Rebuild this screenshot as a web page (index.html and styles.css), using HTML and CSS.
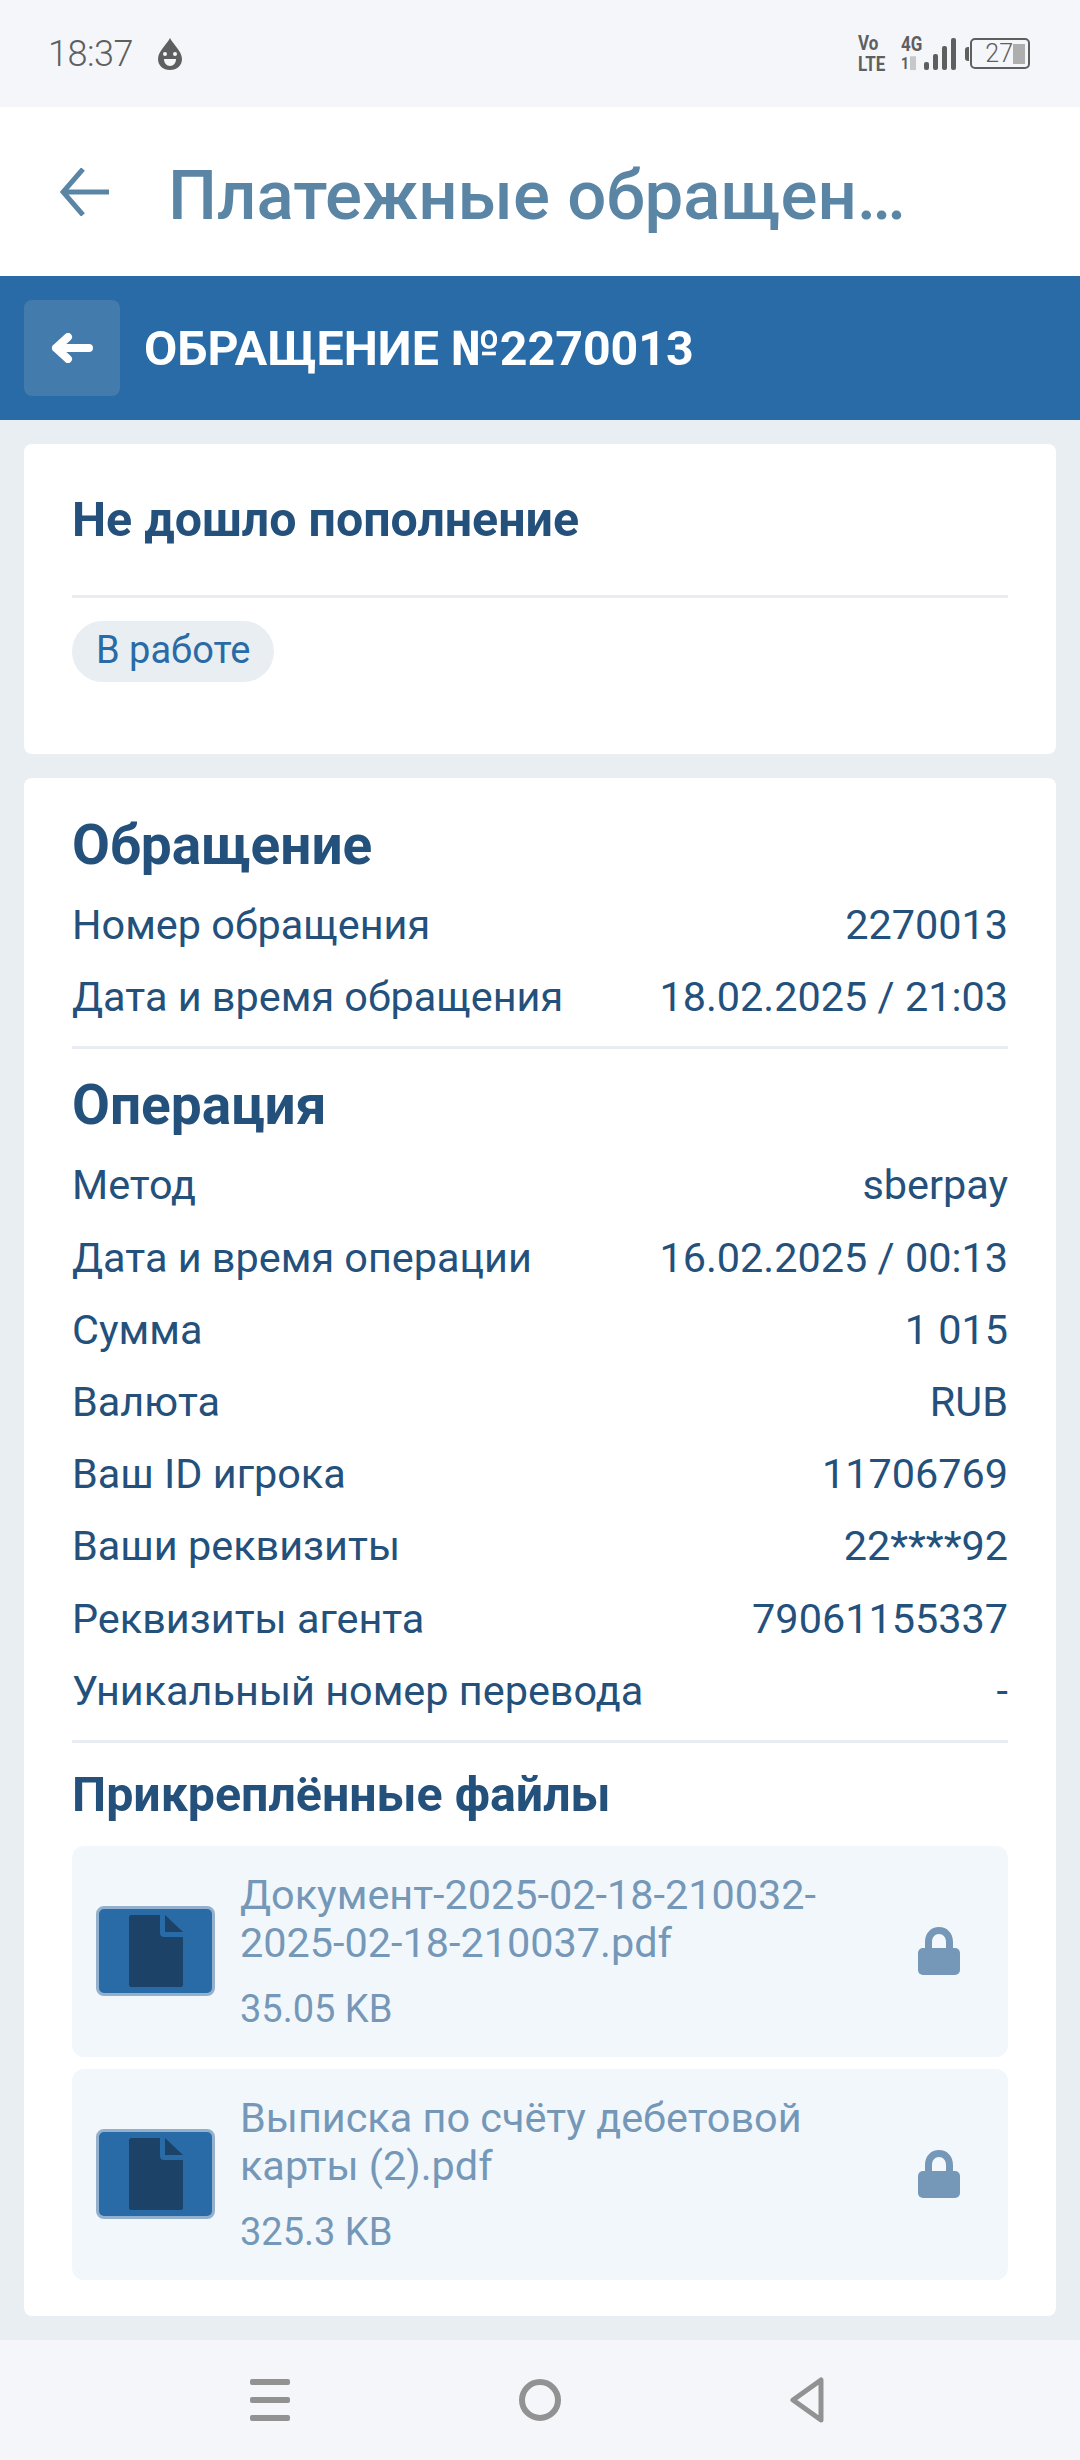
FILE: index.html
```html
<!DOCTYPE html>
<html lang="ru">
<head>
  <meta charset="UTF-8" />
  <title>Платежные обращения</title>
  <link rel="stylesheet" href="styles.css">
</head>
<body>
  <div class="status-bar">
    <div class="status-left">
      <span class="clock">18:37</span>
      <svg class="drop-icon" width="24" height="32" viewBox="0 0 24 32">
        <path d="M12 0C10 5 0 13 0 21C0 27.500 5 32 12 32C19 32 24 27.500 24 21C24 13 14 5 12 0Z" fill="#5f5f5f"/>
        <circle cx="7" cy="16" r="2" fill="#f4f6fa"/>
        <circle cx="17" cy="16" r="2" fill="#f4f6fa"/>
        <path d="M6 21H18C18 25 15.500 28 12 28C8.500 28 6 25 6 21Z" fill="#f4f6fa"/>
      </svg>
    </div>
    <div class="status-right">
      <div class="net-label net-volte"><span>Vo</span><span>LTE</span></div>
      <div class="net-label net-4g"><span>4G</span><span class="sim-num">1<i class="sim-arrow"></i></span></div>
      <div class="signal">
        <i class="bar-1"></i><i class="bar-2"></i><i class="bar-3"></i><i class="bar-4"></i>
      </div>
      <div class="battery-tip"></div>
      <div class="battery">
        <span>27</span>
        <i class="battery-level"></i>
      </div>
    </div>
  </div>

  <header class="app-header">
    <svg class="header-back" width="49" height="48" viewBox="0 0 49 48">
      <path d="M49 24H4M23 1L3 24L23 47" fill="none" stroke="#5b85a5" stroke-width="5"/>
    </svg>
    <h1>Платежные обращен…</h1>
  </header>

  <div class="blue-bar">
    <div class="back-btn">
      <svg width="42" height="30" viewBox="0 0 42 30">
        <path d="M38 15H5M17 4L5 15L17 26" fill="none" stroke="#fff" stroke-width="8" stroke-linecap="round" stroke-linejoin="round"/>
      </svg>
    </div>
    <div class="blue-bar-title">ОБРАЩЕНИЕ №2270013</div>
  </div>

  <main class="content">
    <section class="card card-top">
      <h2 class="ticket-title">Не дошло пополнение</h2>
      <div class="ticket-status"><span class="pill">В работе</span></div>
    </section>

    <section class="card card-info">
      <h3 class="section-title">Обращение</h3>
      <div class="row"><span>Номер обращения</span><span>2270013</span></div>
      <div class="row"><span>Дата и время обращения</span><span>18.02.2025 / 21:03</span></div>
      <hr class="divider">

      <h3 class="section-title">Операция</h3>
      <div class="row"><span>Метод</span><span>sberpay</span></div>
      <div class="row"><span>Дата и время операции</span><span>16.02.2025 / 00:13</span></div>
      <div class="row"><span>Сумма</span><span>1 015</span></div>
      <div class="row"><span>Валюта</span><span>RUB</span></div>
      <div class="row"><span>Ваш ID игрока</span><span>11706769</span></div>
      <div class="row"><span>Ваши реквизиты</span><span>22****92</span></div>
      <div class="row"><span>Реквизиты агента</span><span>79061155337</span></div>
      <div class="row"><span>Уникальный номер перевода</span><span>-</span></div>
      <hr class="divider divider-files">

      <h4 class="files-title">Прикреплённые файлы</h4>

      <div class="file">
        <div class="file-icon">
          <svg width="54" height="72" viewBox="0 0 54 72">
            <path d="M2 0H31V18C31 20.500 32.500 22 35 22H54V70C54 71 53 72 52 72H2C1 72 0 71 0 70V2C0 1 1 0 2 0Z" fill="#1d4268"/>
            <path d="M36 0L54 17H36Z" fill="#1d4268"/>
          </svg>
        </div>
        <div class="file-info">
          <div class="file-name">Документ-2025-02-18-210032-<br>2025-02-18-210037.pdf</div>
          <div class="file-size">35.05 KB</div>
        </div>
        <svg class="lock" width="42" height="48" viewBox="0 0 42 48">
          <path d="M7 22V15C7 6 13 0 21 0C29 0 35 6 35 15V22H28V15C28 10 25 7 21 7C17 7 14 10 14 15V22Z" fill="#7598b8"/>
          <rect y="21" width="42" height="27" rx="5" fill="#7598b8"/>
        </svg>
      </div>

      <div class="file">
        <div class="file-icon">
          <svg width="54" height="72" viewBox="0 0 54 72">
            <path d="M2 0H31V18C31 20.500 32.500 22 35 22H54V70C54 71 53 72 52 72H2C1 72 0 71 0 70V2C0 1 1 0 2 0Z" fill="#1d4268"/>
            <path d="M36 0L54 17H36Z" fill="#1d4268"/>
          </svg>
        </div>
        <div class="file-info">
          <div class="file-name">Выписка по счёту дебетовой<br>карты (2).pdf</div>
          <div class="file-size">325.3 KB</div>
        </div>
        <svg class="lock" width="42" height="48" viewBox="0 0 42 48">
          <path d="M7 22V15C7 6 13 0 21 0C29 0 35 6 35 15V22H28V15C28 10 25 7 21 7C17 7 14 10 14 15V22Z" fill="#7598b8"/>
          <rect y="21" width="42" height="27" rx="5" fill="#7598b8"/>
        </svg>
      </div>
    </section>
  </main>

  <nav class="nav-bar">
    <div class="nav-menu"><i></i><i></i><i></i></div>
    <svg width="42" height="42" viewBox="0 0 42 42">
      <circle cx="21" cy="21" r="18" fill="none" stroke="#929292" stroke-width="6"/>
    </svg>
    <svg width="34" height="46" viewBox="0 0 34 46">
      <path d="M31 3V43L3 23Z" fill="none" stroke="#929292" stroke-width="5" stroke-linejoin="round"/>
    </svg>
  </nav>
</body>
</html>
```

FILE: styles.css
```css
* {
  box-sizing: border-box;
}

body {
  margin: 0;
  background: #e9eef2;
  font-family: 'Roboto', sans-serif;
  color: #24507c;
}

.status-bar {
  height: 107px;
  background: #f4f6fa;
  padding: 0 50px 0 48px;
  display: flex;
  align-items: center;
  justify-content: space-between;
  color: #5f5f5f;
}

.status-left {
  display: flex;
  align-items: center;
  gap: 25px;
}

.clock {
  font-size: 36px;
  font-weight: 300;
  letter-spacing: -0.5px;
}

.status-right {
  display: flex;
  align-items: center;
}

.net-label {
  display: flex;
  flex-direction: column;
  font-weight: 700;
}

.net-volte {
  width: 43px;
  font-size: 17px;
  line-height: 17px;
  transform: scaleY(1.2);
}

.net-4g {
  width: 23px;
  font-size: 17px;
  line-height: 17px;
  transform: scaleY(1.15);
}

.sim-num {
  font-size: 14px;
  position: relative;
}

.sim-arrow {
  position: absolute;
  left: 9px;
  top: 2px;
  width: 6px;
  height: 12px;
  background: #c8c8c8;
}

.signal {
  display: flex;
  align-items: flex-end;
  gap: 4px;
  height: 32px;
}

.signal i {
  width: 5px;
  background: #5f5f5f;
  border-radius: 2px;
}

.bar-1 { height: 8px; }
.bar-2 { height: 16px; }
.bar-3 { height: 24px; }
.bar-4 { height: 32px; }

.battery-tip {
  width: 4px;
  height: 14px;
  margin: 0 1px 0 9px;
  background: #5f5f5f;
  border-radius: 3px 0 0 3px;
}

.battery {
  width: 60px;
  height: 31px;
  border: 2px solid #5f5f5f;
  border-radius: 5px;
  display: flex;
  align-items: center;
  justify-content: flex-end;
  padding-right: 3px;
  font-size: 25px;
  font-weight: 300;
  color: #5f5f5f;
}

.battery-level {
  width: 12px;
  height: 20px;
  background: #aeaeae;
}

.app-header {
  height: 169px;
  background: #fff;
  display: flex;
  align-items: center;
  padding-left: 60px;
}

.app-header h1 {
  margin: 8px 0 0 59px;
  font-size: 69px;
  font-weight: 500;
  color: #5b85a5;
  white-space: nowrap;
}

.blue-bar {
  height: 144px;
  background: #296ba6;
  display: flex;
  align-items: center;
  padding: 0 24px;
}

.back-btn {
  width: 96px;
  height: 96px;
  background: #447bad;
  border-radius: 8px;
  display: flex;
  align-items: center;
  justify-content: center;
}

.blue-bar-title {
  margin-left: 24px;
  font-size: 48.3px;
  font-weight: 700;
  color: #fff;
}

.content {
  padding: 24px;
  display: flex;
  flex-direction: column;
  gap: 24px;
}

.card {
  background: #fff;
  border-radius: 8px;
  padding: 0 48px;
}

.card-top {
  height: 310px;
}

.ticket-title {
  margin: 0;
  height: 154px;
  padding-top: 48px;
  font-size: 48.3px;
  line-height: 56px;
  font-weight: 700;
  color: #24507c;
  border-bottom: 3px solid #e9edf2;
}

.ticket-status {
  margin-top: 23px;
}

.pill {
  display: inline-block;
  height: 61px;
  line-height: 58px;
  padding: 0 24px;
  background: #e9eef2;
  border-radius: 31px;
  font-size: 38px;
  color: #296ba6;
}

.card-info {
  height: 1538px;
  padding-top: 37px;
}

.section-title {
  margin: 0 0 14px;
  font-size: 55px;
  line-height: 60px;
  font-weight: 700;
  color: #24507c;
}

.row {
  height: 72.2px;
  display: flex;
  align-items: center;
  justify-content: space-between;
  font-size: 41.4px;
  color: #24507c;
}

.divider {
  margin: 13px 0 26px;
  border: 0;
  border-top: 3px solid #e9edf2;
}

.divider-files {
  margin-bottom: 24px;
}

.files-title {
  margin: 0 0 23px;
  font-size: 48.3px;
  line-height: 56px;
  font-weight: 700;
  color: #24507c;
}

.file {
  height: 211px;
  margin-bottom: 12px;
  padding: 0 48px 0 24px;
  background: #f2f7fc;
  border-radius: 12px;
  display: flex;
  align-items: center;
  color: #7598b8;
}

.file-icon {
  flex: none;
  width: 119px;
  height: 90px;
  background: #296ba6;
  border: 3px solid #93b0cd;
  border-radius: 8px;
  display: flex;
  align-items: center;
  justify-content: center;
}

.file-info {
  flex: 1;
  margin-left: 25px;
}

.file-name {
  font-size: 41.4px;
  line-height: 48px;
}

.file-size {
  margin-top: 20px;
  font-size: 38px;
  line-height: 44px;
}

.lock {
  flex: none;
}

.nav-bar {
  position: absolute;
  left: 0;
  top: 2340px;
  width: 1080px;
  height: 120px;
  background: #f4f6fa;
  display: flex;
  align-items: center;
  justify-content: space-between;
  padding: 0 256px 0 250px;
}

.nav-menu {
  display: flex;
  flex-direction: column;
  gap: 12px;
}

.nav-menu i {
  display: block;
  width: 40px;
  height: 6px;
  background: #929292;
  border-radius: 2px;
}
```
